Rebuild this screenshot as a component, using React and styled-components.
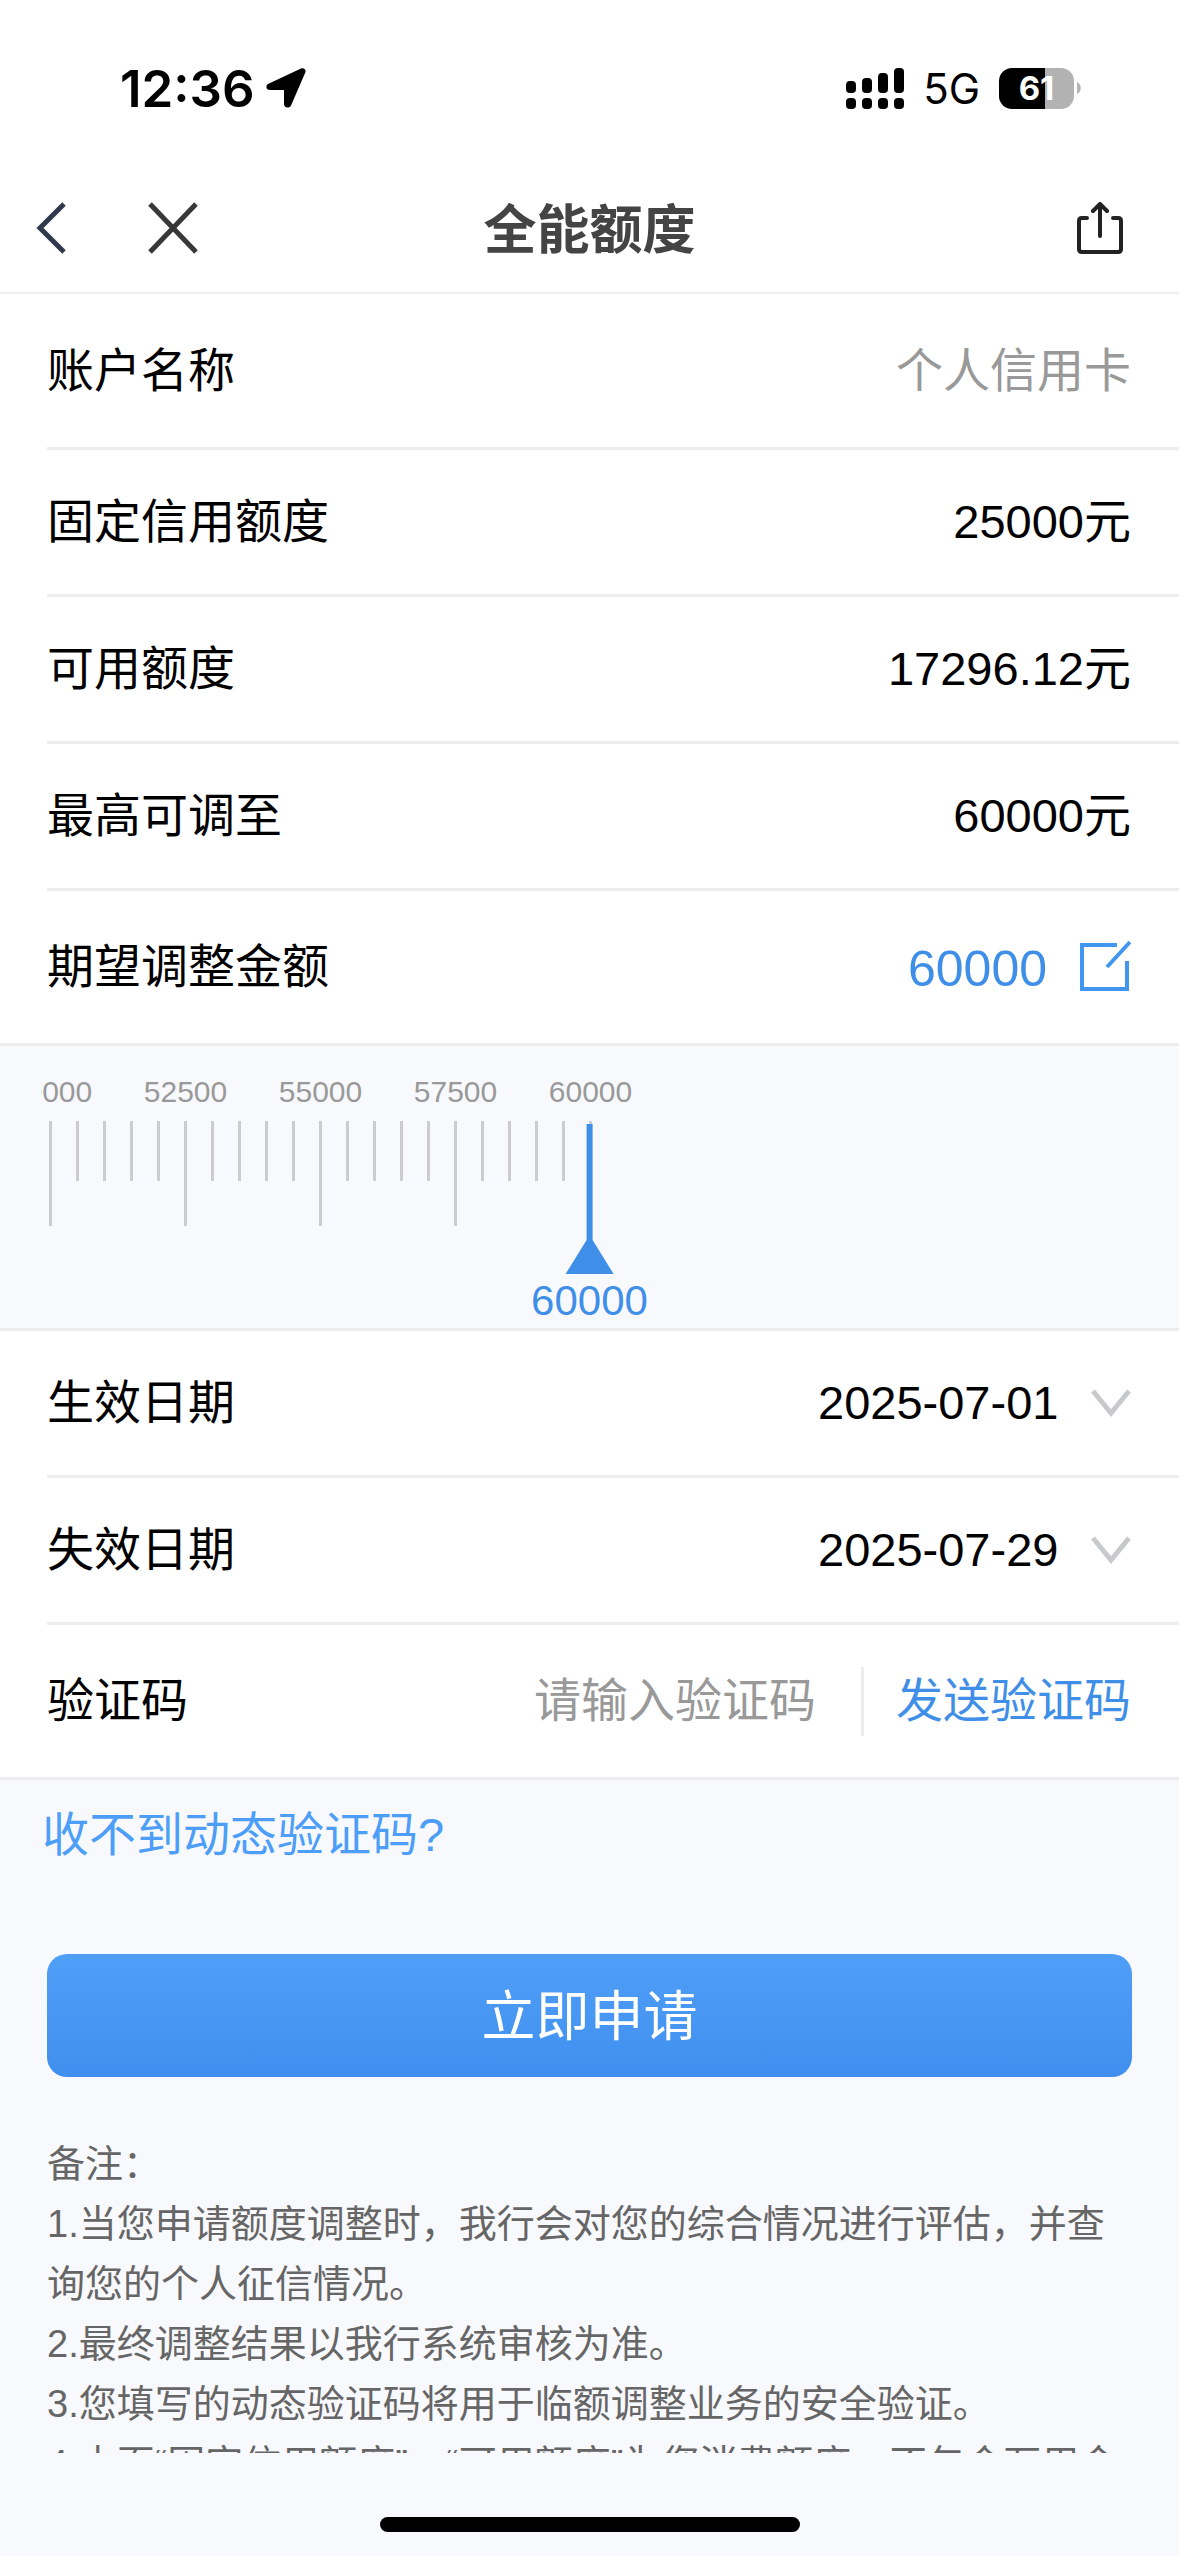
import React, { useState } from "react";
import styled, { createGlobalStyle } from "styled-components";

const GlobalStyle = createGlobalStyle`
  * {
    box-sizing: border-box;
  }
  body {
    margin: 0;
    background: #f8f9fd;
    color: #000000;
    font-family: "Liberation Sans", "Noto Sans CJK SC", sans-serif;
    font-size: 47px;
  }
  button, input, select {
    margin: 0;
    padding: 0;
    border: 0;
    outline: 0;
    background: none;
    font: inherit;
    color: inherit;
  }
  svg {
    display: block;
    flex: none;
  }
`;

const Screen = styled.div`
  display: flex;
  flex-direction: column;
  height: 100vh;
`;

const StatusBar = styled.div`
  display: flex;
  align-items: center;
  justify-content: space-between;
  height: 176px;
  padding: 0 98px 0 120px;
  background: #ffffff;
  font-family: Inter, sans-serif;
`;

const StatusGroup = styled.div`
  display: flex;
  align-items: center;
  gap: ${(props) => props.$gap}px;
`;

const Clock = styled.span`
  font-size: 51px;
  font-weight: 600;
`;

const Network = styled.span`
  font-size: 42px;
`;

const Battery = styled.div`
  display: flex;
  align-items: center;
  gap: 3px;
`;

const BatteryBody = styled.div`
  width: 75px;
  height: 41px;
  border-radius: 13px;
  background: linear-gradient(to right, #000000 61%, #b2b2b2 61%);
  color: #ffffff;
  font-size: 33px;
  font-weight: 700;
  line-height: 41px;
  text-align: center;
`;

const Header = styled.header`
  display: grid;
  grid-template-columns: 1fr auto 1fr;
  align-items: center;
  height: 118px;
  padding: 0 36px 12px;
  border-bottom: 2px solid #ededed;
  background: #ffffff;
`;

const HeaderActions = styled.div`
  display: flex;
  gap: 80px;
`;

const IconButton = styled.button`
  display: flex;
  cursor: pointer;
`;

const ShareButton = styled(IconButton)`
  justify-self: end;
  padding: 0 20px;
`;

const Title = styled.h1`
  margin: 0;
  padding-top: 6px;
  color: #444444;
  font-size: 53px;
  font-weight: 600;
  line-height: 60px;
`;

const Content = styled.main`
  flex: 1;
  min-height: 0;
  overflow-y: auto;
  scrollbar-width: none;
`;

const Section = styled.section`
  padding-left: 47px;
  border-bottom: 3px solid #ededed;
  background: #ffffff;
`;

const Row = styled.div`
  display: flex;
  align-items: center;
  justify-content: space-between;
  height: ${(props) => (props.$tall ? 156 : 147)}px;
  padding-right: 48px;
  border-bottom: 3px solid #ededed;
  line-height: 60px;

  &:last-child {
    height: 152px;
    border-bottom: 0;
  }
`;

const Value = styled.span`
  color: ${(props) => (props.$muted ? "#999999" : "#000000")};
`;

const Amount = styled.button`
  display: flex;
  align-items: flex-end;
  gap: 30px;
  color: #3f8fe9;
  font-size: 50px;
  line-height: 50px;
  cursor: pointer;
`;

const Picker = styled.div`
  display: flex;
  align-items: center;
  gap: 32px;
`;

const DateSelect = styled.select`
  appearance: none;
  cursor: pointer;
`;

const CodeGroup = styled.div`
  display: flex;
  flex: 1;
  align-items: center;
  justify-content: flex-end;
`;

const CodeInput = styled.input`
  flex: 1;
  min-width: 0;
  padding: 0 45px;
  text-align: right;

  &::placeholder {
    color: #999999;
    opacity: 1;
  }
`;

const SendButton = styled.button`
  display: flex;
  align-items: center;
  height: 69px;
  padding-left: 32px;
  border-left: 3px solid #ededed;
  color: #3f8fe9;
  cursor: pointer;
`;

const Ruler = styled.div`
  position: relative;
  height: 285px;
  padding: 28px 42px 0 41px;
  border-bottom: 3px solid #ededed;
`;

const ScaleWindow = styled.div`
  overflow: hidden;
`;

const Scale = styled.div`
  display: flex;
  justify-content: flex-end;
  width: calc(50% + 15px);
`;

const Tick = styled.div`
  display: flex;
  flex: none;
  flex-direction: column;
  align-items: center;
  width: 27px;

  &::after {
    content: "";
    width: 3px;
    height: ${(props) => (props.$major ? 105 : 60)}px;
    background: #cccccc;
  }
`;

const TickLabel = styled.span`
  display: flex;
  justify-content: center;
  width: 0;
  height: 47px;
  color: #999999;
  font-size: 30px;
  line-height: 36px;
`;

// sits on top of the scale, always in the middle of the ruler
const Pointer = styled.div`
  position: absolute;
  top: 78px;
  left: 50%;
  display: flex;
  flex-direction: column;
  align-items: center;
  color: #3f8fe9;
  font-size: 42px;
  line-height: 54px;
  transform: translateX(-50%);
`;

const RangeInput = styled.input`
  position: absolute;
  inset: 0;
  width: 100%;
  height: 100%;
  opacity: 0;
  cursor: pointer;
`;

const HelpLink = styled.a`
  display: inline-block;
  margin: 25px 42px 0;
  color: #4d9ef8;
  line-height: 60px;
  text-decoration: none;
`;

const SubmitButton = styled.button`
  display: block;
  width: calc(100% - 94px);
  height: 123px;
  margin: 89px 47px 0;
  padding-bottom: 6px;
  border-radius: 20px;
  background: linear-gradient(#4f9ff8, #408fee);
  color: #ffffff;
  font-size: 54px;
  cursor: pointer;
`;

const Notes = styled.div`
  padding: 57px 47px 0;
  color: #666666;
  font-size: 38px;
  line-height: 60px;

  p {
    margin: 0;
  }
`;

const HomeBar = styled.footer`
  display: flex;
  flex: none;
  justify-content: center;
  height: 103px;
  padding-top: 64px;

  &::before {
    content: "";
    width: 420px;
    height: 15px;
    border-radius: 8px;
    background: #000000;
  }
`;

const LocationIcon = () => (
  <svg width="40" height="40" viewBox="0 0 40 40" aria-hidden="true">
    <path
      d="M2.500 15.800 35 .6c2.600-1.200 5.400 1 4.300 4L25 37.400c-1.600 3.400-7 2.600-7-1.400V22H4.200C-.2 22-.8 17.400 2.500 15.800Z"
      fill="#000"
    />
  </svg>
);

const SignalIcon = () => (
  <svg width="58" height="41" viewBox="0 0 58 41" aria-hidden="true">
    {[13, 10, 5, 0].map((top, i) => (
      <g key={top}>
        <rect x={i * 16} y={top} width="10" height={25 - top} rx="4" />
        <rect x={i * 16} y="30" width="10" height="11" rx="4" />
      </g>
    ))}
  </svg>
);

const BatteryTip = () => (
  <svg width="4" height="12" viewBox="0 0 4 12" aria-hidden="true">
    <path d="M0 0c5 2 5 10 0 12Z" fill="#b2b2b2" />
  </svg>
);

const BackIcon = () => (
  <svg width="32" height="52" viewBox="0 0 32 52" fill="none">
    <path d="M28 2 4 26l24 24" stroke="#313a4a" strokeWidth="5" />
  </svg>
);

const CloseIcon = () => (
  <svg width="50" height="52" viewBox="0 0 50 52" fill="none">
    <path d="m2 2 46 48M48 2 2 50" stroke="#383838" strokeWidth="5" />
  </svg>
);

const ShareIcon = () => (
  <svg width="46" height="52" viewBox="0 0 46 52" fill="none">
    <path
      d="M10 16H5q-3 0-3 3v28q0 3 3 3h36q3 0 3-3V19q0-3-3-3h-5M23 34V4M16 9l7-7 7 7"
      stroke="#222"
      strokeWidth="4"
      strokeLinecap="round"
      strokeLinejoin="round"
    />
  </svg>
);

const EditIcon = () => (
  <svg width="54" height="54" viewBox="0 0 54 54" fill="none">
    <path d="M40 5H5v44h45V21M53 2 30 27" stroke="#4396ef" strokeWidth="4" />
  </svg>
);

const ChevronIcon = () => (
  <svg width="40" height="28" viewBox="0 0 40 28" fill="none">
    <path d="m2 2 18 22L38 2" stroke="#c8c9cc" strokeWidth="5" />
  </svg>
);

const limits = [
  { label: "账户名称", value: "个人信用卡", muted: true, tall: true },
  { label: "固定信用额度", value: "25000元" },
  { label: "可用额度", value: "17296.12元" },
  { label: "最高可调至", value: "60000元" },
];

const dates = [
  { id: "start-date", label: "生效日期", value: "2025-07-01" },
  { id: "end-date", label: "失效日期", value: "2025-07-29" },
];

const notes = [
  "1.当您申请额度调整时，我行会对您的综合情况进行评估，并查询您的个人征信情况。",
  "2.最终调整结果以我行系统审核为准。",
  "3.您填写的动态验证码将用于临额调整业务的安全验证。",
  "4.本页“固定信用额度”、“可用额度”为您消费额度，不包含万用金",
];

const MAX = 60000;
const STEP = 500;
const TICK_COUNT = 21;

const LimitRuler = ({ amount, setAmount }) => {
  const ticks = Array.from(
    { length: TICK_COUNT },
    (_, i) => amount - (TICK_COUNT - 1 - i) * STEP
  );
  return (
    <Ruler>
      <ScaleWindow>
        <Scale>
          {ticks.map((tick) => {
            const major = tick % (STEP * 5) === 0;
            return (
              <Tick key={tick} $major={major}>
                <TickLabel>{major ? tick : ""}</TickLabel>
              </Tick>
            );
          })}
        </Scale>
      </ScaleWindow>
      <Pointer>
        <svg width="50" height="150" viewBox="0 0 50 150" aria-hidden="true">
          <path d="M22 0h6v116l21 34H1l21-34Z" fill="#3f8fe9" />
        </svg>
        {amount}
      </Pointer>
      <RangeInput
        type="range"
        aria-label="期望调整金额"
        min={25000}
        max={MAX}
        step={STEP}
        value={amount}
        onChange={(e) => setAmount(Number(e.target.value))}
      />
    </Ruler>
  );
};

const App = () => {
  const [amount, setAmount] = useState(MAX);
  const [code, setCode] = useState("");

  return (
    <Screen>
      <GlobalStyle />
      <StatusBar>
        <StatusGroup $gap={11}>
          <Clock>12:36</Clock>
          <LocationIcon />
        </StatusGroup>
        <StatusGroup $gap={19}>
          <SignalIcon />
          <Network>5G</Network>
          <Battery>
            <BatteryBody>61</BatteryBody>
            <BatteryTip />
          </Battery>
        </StatusGroup>
      </StatusBar>
      <Header>
        <HeaderActions>
          <IconButton type="button" aria-label="返回">
            <BackIcon />
          </IconButton>
          <IconButton type="button" aria-label="关闭">
            <CloseIcon />
          </IconButton>
        </HeaderActions>
        <Title>全能额度</Title>
        <ShareButton type="button" aria-label="分享">
          <ShareIcon />
        </ShareButton>
      </Header>
      <Content>
        <Section>
          {limits.map((item) => (
            <Row key={item.label} $tall={item.tall}>
              <span>{item.label}</span>
              <Value $muted={item.muted}>{item.value}</Value>
            </Row>
          ))}
          <Row>
            <span>期望调整金额</span>
            <Amount type="button">
              {amount}
              <EditIcon />
            </Amount>
          </Row>
        </Section>
        <LimitRuler amount={amount} setAmount={setAmount} />
        <Section>
          {dates.map((item) => (
            <Row key={item.id}>
              <label htmlFor={item.id}>{item.label}</label>
              <Picker>
                <DateSelect id={item.id} defaultValue={item.value}>
                  <option>{item.value}</option>
                </DateSelect>
                <ChevronIcon />
              </Picker>
            </Row>
          ))}
          <Row>
            <label htmlFor="code">验证码</label>
            <CodeGroup>
              <CodeInput
                id="code"
                type="text"
                placeholder="请输入验证码"
                value={code}
                onChange={(e) => setCode(e.target.value)}
              />
              <SendButton type="button">发送验证码</SendButton>
            </CodeGroup>
          </Row>
        </Section>
        <HelpLink href="#help">收不到动态验证码?</HelpLink>
        <SubmitButton type="button">立即申请</SubmitButton>
        <Notes>
          <p>备注：</p>
          {notes.map((note) => (
            <p key={note}>{note}</p>
          ))}
        </Notes>
      </Content>
      <HomeBar />
    </Screen>
  );
};

export default App;
